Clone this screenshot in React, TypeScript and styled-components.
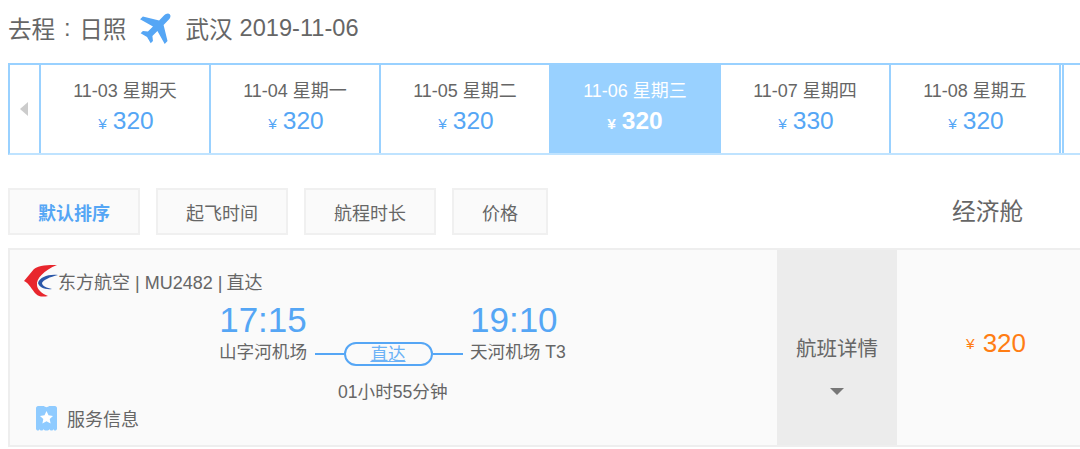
import { FC } from "react";
import styled, { createGlobalStyle } from "styled-components";

const GlobalStyle = createGlobalStyle`
  html, body {
    margin: 0;
    padding: 0;
    background: #fff;
    overflow: hidden;
  }
  body {
    font-family: "Liberation Sans", "Noto Sans CJK SC", sans-serif;
    color: #666;
  }
`;

const Page = styled.div`
  width: 1080px;
  height: 449px;
  padding-left: 8px;
  box-sizing: border-box;
  overflow: hidden;
`;

const Title = styled.div`
  height: 56px;
  margin-bottom: 7px;
  display: flex;
  align-items: center;
  font-size: 23.6px;
  white-space: nowrap;
`;

const TitleColon = styled.span`
  width: 24px;
  text-align: center;
`;

const PlaneIcon = styled.svg`
  width: 38px;
  height: 38px;
  margin: 0 8px 0 13px;
  flex: none;
  transform: translateY(-2px) rotate(45deg);
`;

const TitleDate = styled.span`
  margin-left: 7px;
`;

const DateStrip = styled.div`
  display: flex;
  width: 1072px;
  height: 92px;
  box-sizing: border-box;
  border: 2px solid #99d1ff;
  border-right: 0;
  border-bottom-color: #bfe3ff;
  overflow: hidden;
`;

const ArrowCell = styled.div`
  flex: none;
  width: 29px;
  display: flex;
  align-items: center;
  justify-content: center;
  border-right: 2px solid #99d1ff;
`;

const ArrowLeft = styled.div`
  width: 0;
  height: 0;
  margin-right: 2px;
  border-style: solid;
  border-width: 7px 8px 7px 0;
  border-color: transparent #ccc transparent transparent;
`;

const DateCell = styled.div<{ $active?: boolean }>`
  flex: none;
  width: 168px;
  border-right: 2px solid #99d1ff;
  padding-top: 14px;
  text-align: center;
  background: ${(p) => (p.$active ? "#99d1ff" : "#fff")};
  color: ${(p) => (p.$active ? "#fff" : "#666")};
`;

const DateLabel = styled.div`
  font-size: 18px;
  line-height: 24px;
  white-space: nowrap;
`;

const DatePrice = styled.div<{ $active?: boolean }>`
  margin-top: 3px;
  padding-left: ${(p) => (p.$active ? 0 : 2)}px;
  line-height: 30px;
  font-size: 24.5px;
  font-weight: ${(p) => (p.$active ? 700 : 400)};
  color: ${(p) => (p.$active ? "#fff" : "#55a6f5")};
`;

const Yen = styled.span<{ $gap: number }>`
  font-size: 15.5px;
  margin-right: ${(p) => p.$gap}px;
`;

const NextCell = styled.div`
  flex: 1;
  margin-left: 1px;
  border-left: 2px solid #99d1ff;
`;

const SortRow = styled.div`
  display: flex;
  align-items: center;
  gap: 16px;
  margin-top: 33px;
  height: 47px;
`;

const SortButton = styled.div<{ $active?: boolean; $width: number }>`
  width: ${(p) => p.$width}px;
  height: 47px;
  padding-top: 1px;
  box-sizing: border-box;
  display: flex;
  align-items: center;
  justify-content: center;
  background: #fafafa;
  border: 2px solid #f0f0f0;
  font-size: 18px;
  font-weight: ${(p) => (p.$active ? 700 : 400)};
  color: ${(p) => (p.$active ? "#55a6f5" : "#666")};
`;

const CabinLabel = styled.div`
  margin-left: auto;
  width: 128px;
  padding-bottom: 4px;
  font-size: 23.7px;
`;

const Card = styled.div`
  display: flex;
  width: 1072px;
  height: 199px;
  margin-top: 13px;
  box-sizing: border-box;
  background: #fafafa;
  border-top: 2px solid #eee;
  border-bottom: 2px solid #eee;
  border-left: 2px solid #eee;
`;

const FlightInfo = styled.div`
  width: 767px;
  flex: none;
  display: flex;
  flex-direction: column;
  padding-left: 14px;
  box-sizing: border-box;
`;

const Airline = styled.div`
  display: flex;
  align-items: center;
  height: 36px;
  margin-top: 13px;
  font-size: 18px;
  white-space: nowrap;
`;

const AirlineLogo = styled.svg`
  width: 34px;
  height: 32px;
  flex: none;
`;

const AirlineStop = styled.span`
  margin-left: -1px;
`;

const Schedule = styled.div`
  display: flex;
  margin-top: 1px;
  padding-left: 195px;
`;

const Endpoint = styled.div<{ $align: "center" | "left" }>`
  text-align: ${(p) => p.$align};
  white-space: nowrap;
`;

const Time = styled.div`
  font-size: 35px;
  line-height: 40px;
  color: #55a6f5;
`;

const Airport = styled.div`
  margin-top: 2px;
  font-size: 17.6px;
  line-height: 20px;
`;

const Connector = styled.div`
  width: 148px;
  margin: 42px 7px 0 8px;
  flex: none;
  height: 24px;
  display: flex;
  align-items: center;
`;

const ConnectorLine = styled.div`
  flex: 1;
  height: 2px;
  background: #55a6f5;
`;

const StopPill = styled.div`
  flex: none;
  width: 89px;
  height: 24px;
  padding-right: 2px;
  box-sizing: border-box;
  border: 2px solid #55a6f5;
  border-radius: 12px;
  text-align: center;
  font-size: 17.6px;
  line-height: 20px;
  color: #6cb2f6;
  text-decoration: underline;
  text-underline-offset: 1px;
`;

const Duration = styled.div`
  margin: 15px 0 0 314px;
  font-size: 17.6px;
  line-height: 22px;
  white-space: nowrap;
`;

const Service = styled.div`
  display: flex;
  align-items: center;
  gap: 10px;
  margin: 1px 0 0 12px;
  height: 28px;
  font-size: 18px;
`;

const ServiceIcon = styled.svg`
  width: 21px;
  height: 25px;
  flex: none;
`;

const DetailToggle = styled.div`
  width: 120px;
  flex: none;
  background: #ececec;
  display: flex;
  flex-direction: column;
  align-items: center;
  padding-top: 85px;
  box-sizing: border-box;
  font-size: 20.5px;
  white-space: nowrap;
`;

const ToggleLabel = styled.div`
  line-height: 28px;
`;

const ToggleArrow = styled.div`
  margin-top: 25px;
  width: 0;
  height: 0;
  border-style: solid;
  border-width: 7px 7.5px 0 7.5px;
  border-color: #777 transparent transparent transparent;
`;

const FareCell = styled.div`
  flex: 1;
  display: flex;
  align-items: center;
  padding: 0 0 8px 69px;
  box-sizing: border-box;
  color: #ff7d13;
  font-size: 26px;
  white-space: nowrap;
`;

type DayPrice = {
  date: string;
  week: string;
  price: number;
  active?: boolean;
};

const days: DayPrice[] = [
  { date: "11-03", week: "星期天", price: 320 },
  { date: "11-04", week: "星期一", price: 320 },
  { date: "11-05", week: "星期二", price: 320 },
  { date: "11-06", week: "星期三", price: 320, active: true },
  { date: "11-07", week: "星期四", price: 330 },
  { date: "11-08", week: "星期五", price: 320 },
];

const sorts = [
  { label: "默认排序", width: 132, active: true },
  { label: "起飞时间", width: 132 },
  { label: "航程时长", width: 132 },
  { label: "价格", width: 96 },
];

const App: FC = () => (
  <>
    <GlobalStyle />
    <Page>
      <Title>
        去程<TitleColon>:</TitleColon>日照
        <PlaneIcon viewBox="0 0 24 24">
          <path
            d="M12 1.500 C13.300 1.500 14 3 14 4.500 V9 L23 14.500 V17 L14 14.500 V19 L16.500 21 V23 L12 21.800 L7.500 23 V21 L10 19 V14.500 L1 17 V14.500 L10 9 V4.500 C10 3 10.700 1.500 12 1.500 Z"
            fill="#55a6f5"
          />
        </PlaneIcon>
        武汉<TitleDate>2019-11-06</TitleDate>
      </Title>

      <DateStrip>
        <ArrowCell>
          <ArrowLeft />
        </ArrowCell>
        {days.map((d) => (
          <DateCell key={d.date} $active={d.active}>
            <DateLabel>
              {d.date} {d.week}
            </DateLabel>
            <DatePrice $active={d.active}>
              <Yen $gap={6}>¥</Yen>
              {d.price}
            </DatePrice>
          </DateCell>
        ))}
        <NextCell />
      </DateStrip>

      <SortRow>
        {sorts.map((s) => (
          <SortButton key={s.label} $width={s.width} $active={s.active}>
            {s.label}
          </SortButton>
        ))}
        <CabinLabel>经济舱</CabinLabel>
      </SortRow>

      <Card>
        <FlightInfo>
          <Airline>
            <AirlineLogo viewBox="0 0 34 32">
              <path
                d="M33 0 C24 0 15 0 10 4 L0 16 C5 18 8 25 12 29 C15 32 19 32 24 31 C18 29 13 24 13 20 C12 14 20 5 33 0 Z"
                fill="#e8262d"
              />
              <path
                d="M34 10 C24 9 16 12 14 18 C15 22 21 25 28 24 C23 23 18 21 18 18 C19 15 26 12 34 10 Z"
                fill="#2a57a8"
              />
            </AirlineLogo>
            <span>
              东方航空 | MU2482 | <AirlineStop>直达</AirlineStop>
            </span>
          </Airline>

          <Schedule>
            <Endpoint $align="center">
              <Time>17:15</Time>
              <Airport>山字河机场</Airport>
            </Endpoint>
            <Connector>
              <ConnectorLine />
              <StopPill>直达</StopPill>
              <ConnectorLine />
            </Connector>
            <Endpoint $align="left">
              <Time>19:10</Time>
              <Airport>天河机场 T3</Airport>
            </Endpoint>
          </Schedule>

          <Duration>01小时55分钟</Duration>

          <Service>
            <ServiceIcon viewBox="0 0 21 25">
              <path
                d="M2 0 H8 C9 1.500 12 1.500 13 0 H19 C20 0 21 1 21 2 V23 C20 25 18 25 17.500 23 C17 25 14 25 13.500 23 C13 25 8 25 7.500 23 C7 25 4 25 3.500 23 C3 25 1 25 0 23 V2 C0 1 1 0 2 0 Z"
                fill="#8fcbff"
              />
              <path
                d="M10.500 5 L12.500 9.300 L17 9.900 L13.700 13 L14.600 17.500 L10.500 15.300 L6.400 17.500 L7.300 13 L4 9.900 L8.500 9.300 Z"
                fill="#fff"
              />
            </ServiceIcon>
            服务信息
          </Service>
        </FlightInfo>

        <DetailToggle>
          <ToggleLabel>航班详情</ToggleLabel>
          <ToggleArrow />
        </DetailToggle>

        <FareCell>
          <Yen $gap={8}>¥</Yen>
          320
        </FareCell>
      </Card>
    </Page>
  </>
);

export default App;
